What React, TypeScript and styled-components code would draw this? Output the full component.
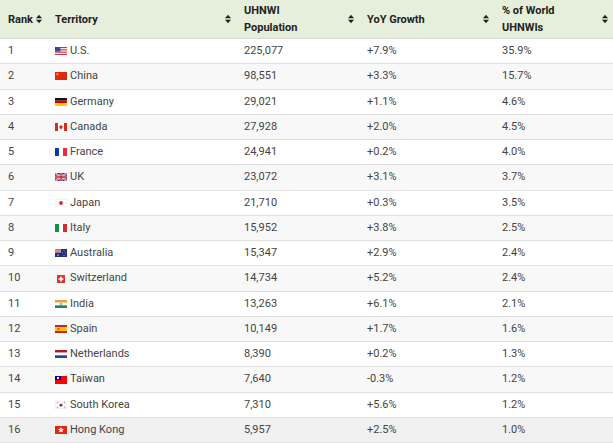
import React from 'react';
import styled, { createGlobalStyle } from 'styled-components';

const GlobalStyle = createGlobalStyle`
  html, body {
    margin: 0;
    padding: 0;
    background: #fff;
  }
  body {
    font-family: Roboto, "Liberation Sans", Arial, sans-serif;
  }
`;

type Row = {
  rank: number;
  name: string;
  flag: string;
  population: string;
  growth: string;
  share: string;
};

const rows: Row[] = [
  { rank: 1, name: 'U.S.', flag: 'us', population: '225,077', growth: '+7.9%', share: '35.9%' },
  { rank: 2, name: 'China', flag: 'cn', population: '98,551', growth: '+3.3%', share: '15.7%' },
  { rank: 3, name: 'Germany', flag: 'de', population: '29,021', growth: '+1.1%', share: '4.6%' },
  { rank: 4, name: 'Canada', flag: 'ca', population: '27,928', growth: '+2.0%', share: '4.5%' },
  { rank: 5, name: 'France', flag: 'fr', population: '24,941', growth: '+0.2%', share: '4.0%' },
  { rank: 6, name: 'UK', flag: 'gb', population: '23,072', growth: '+3.1%', share: '3.7%' },
  { rank: 7, name: 'Japan', flag: 'jp', population: '21,710', growth: '+0.3%', share: '3.5%' },
  { rank: 8, name: 'Italy', flag: 'it', population: '15,952', growth: '+3.8%', share: '2.5%' },
  { rank: 9, name: 'Australia', flag: 'au', population: '15,347', growth: '+2.9%', share: '2.4%' },
  { rank: 10, name: 'Switzerland', flag: 'ch', population: '14,734', growth: '+5.2%', share: '2.4%' },
  { rank: 11, name: 'India', flag: 'in', population: '13,263', growth: '+6.1%', share: '2.1%' },
  { rank: 12, name: 'Spain', flag: 'es', population: '10,149', growth: '+1.7%', share: '1.6%' },
  { rank: 13, name: 'Netherlands', flag: 'nl', population: '8,390', growth: '+0.2%', share: '1.3%' },
  { rank: 14, name: 'Taiwan', flag: 'tw', population: '7,640', growth: '-0.3%', share: '1.2%' },
  { rank: 15, name: 'South Korea', flag: 'kr', population: '7,310', growth: '+5.6%', share: '1.2%' },
  { rank: 16, name: 'Hong Kong', flag: 'hk', population: '5,957', growth: '+2.5%', share: '1.0%' },
];

const columns = [
  { label: ['Rank'], width: 47, tight: true },
  { label: ['Territory'], width: 189 },
  { label: ['UHNWI', 'Population'], width: 123 },
  { label: ['YoY Growth'], width: 135 },
  { label: ['% of World', 'UHNWIs'], width: 119 },
];

const Table = styled.table`
  width: 613px;
  table-layout: fixed;
  border-collapse: collapse;
  font-size: 11px;
`;

const HeadCell = styled.th`
  background: #e6eedc;
  color: #222;
  font-weight: 700;
  text-align: left;
  line-height: 17px;
  padding: 2px 5px 2px 8px;
  border-bottom: 1px solid #d6dccf;
  vertical-align: middle;
`;

const HeadInner = styled.div<{ $tight?: boolean }>`
  display: flex;
  align-items: center;
  justify-content: ${p => (p.$tight ? 'flex-start' : 'space-between')};
  gap: 3px;
`;

const BodyRow = styled.tr<{ $shade: string }>`
  background: ${p => p.$shade};
`;

const Cell = styled.td`
  color: #444;
  line-height: 16.27px;
  padding: 4px 5px 4px 8px;
  border-bottom: 1px solid #e0e0e0;
  white-space: nowrap;
  vertical-align: middle;
`;

const Territory = styled.div`
  display: flex;
  align-items: center;
  gap: 3px;
  height: 16.27px;
`;

const FlagBox = styled.svg`
  display: block;
  width: 12px;
  height: 8px;
  flex: none;
`;

const SortIcon = () => (
  <svg width="6" height="10" viewBox="0 0 6 10" style={{ flex: 'none' }}>
    <path d="M0 4.2 L3 0.8 L6 4.2 Z" fill="#222" />
    <path d="M0 5.8 L3 9.2 L6 5.8 Z" fill="#222" />
  </svg>
);

const star = (cx: number, cy: number, r: number) => {
  const pts: string[] = [];
  for (let i = 0; i < 10; i++) {
    const a = (Math.PI / 5) * i - Math.PI / 2;
    const rr = i % 2 === 0 ? r : r * 0.4;
    pts.push(`${(cx + rr * Math.cos(a)).toFixed(2)},${(cy + rr * Math.sin(a)).toFixed(2)}`);
  }
  return pts.join(' ');
};

const UnionJack = ({ w, h }: { w: number; h: number }) => (
  <g>
    <rect width={w} height={h} fill="#23327d" />
    <path d={`M0 0 L${w} ${h} M${w} 0 L0 ${h}`} stroke="#fff" strokeWidth={h * 0.22} />
    <path d={`M0 0 L${w} ${h} M${w} 0 L0 ${h}`} stroke="#cf1b2b" strokeWidth={h * 0.09} />
    <path d={`M${w / 2} 0 V${h} M0 ${h / 2} H${w}`} stroke="#fff" strokeWidth={h * 0.32} />
    <path d={`M${w / 2} 0 V${h} M0 ${h / 2} H${w}`} stroke="#cf1b2b" strokeWidth={h * 0.18} />
  </g>
);

const flagArt: Record<string, React.ReactNode> = {
  us: (
    <g>
      <rect width="12" height="8" fill="#fff" />
      {[0, 2, 4, 6].map(i => (
        <rect key={i} y={i * 1.15} width="12" height="1.15" fill="#c7374a" />
      ))}
      <rect width="5.4" height="4.6" fill="#3c4a8e" />
    </g>
  ),
  cn: (
    <g>
      <rect width="12" height="8" fill="#de2910" />
      <polygon points={star(2.4, 2.2, 1.5)} fill="#ffde00" />
    </g>
  ),
  de: (
    <g>
      <rect width="12" height="2.67" fill="#111" />
      <rect y="2.67" width="12" height="2.67" fill="#dd0000" />
      <rect y="5.33" width="12" height="2.67" fill="#ffce00" />
    </g>
  ),
  ca: (
    <g>
      <rect width="12" height="8" fill="#fff" />
      <rect width="3" height="8" fill="#d52b1e" />
      <rect x="9" width="3" height="8" fill="#d52b1e" />
      <polygon points="6,1.6 6.8,3 7.8,2.6 7.3,4.6 8,4.4 6.3,6 6.3,6.6 5.7,6.6 5.7,6 4,4.4 4.7,4.6 4.2,2.6 5.2,3" fill="#d52b1e" />
    </g>
  ),
  fr: (
    <g>
      <rect width="4" height="8" fill="#0f3aa8" />
      <rect x="4" width="4" height="8" fill="#fff" />
      <rect x="8" width="4" height="8" fill="#ee2a3a" />
    </g>
  ),
  gb: <UnionJack w={12} h={8} />,
  jp: (
    <g>
      <rect x="0.25" y="0.25" width="11.5" height="7.5" fill="#fff" stroke="#e6e6e6" strokeWidth="0.5" />
      <circle cx="6" cy="4" r="1.9" fill="#d8263c" />
    </g>
  ),
  it: (
    <g>
      <rect width="4" height="8" fill="#119245" />
      <rect x="4" width="4" height="8" fill="#fff" />
      <rect x="8" width="4" height="8" fill="#d72b34" />
    </g>
  ),
  au: (
    <g>
      <rect width="12" height="8" fill="#1d2e83" />
      <svg width="6" height="4" viewBox="0 0 12 8">
        <UnionJack w={12} h={8} />
      </svg>
      <polygon points={star(3, 6.2, 1.1)} fill="#fff" />
      <polygon points={star(9, 1.8, 0.7)} fill="#fff" />
      <polygon points={star(10.4, 4, 0.7)} fill="#fff" />
      <polygon points={star(9, 6.6, 0.7)} fill="#fff" />
      <polygon points={star(7.6, 3.8, 0.6)} fill="#fff" />
    </g>
  ),
  ch: (
    <g>
      <rect x="2" width="8" height="8" fill="#e03131" rx="0.6" />
      <rect x="5.2" y="1.6" width="1.6" height="4.8" fill="#fff" />
      <rect x="3.6" y="3.2" width="4.8" height="1.6" fill="#fff" />
    </g>
  ),
  in: (
    <g>
      <rect width="12" height="2.67" fill="#f59a36" />
      <rect y="2.67" width="12" height="2.67" fill="#fff" />
      <rect y="5.33" width="12" height="2.67" fill="#149147" />
      <circle cx="6" cy="4" r="1" fill="none" stroke="#2b3a8f" strokeWidth="0.45" />
    </g>
  ),
  es: (
    <g>
      <rect width="12" height="8" fill="#c8232c" />
      <rect y="2" width="12" height="4" fill="#ffc400" />
      <rect x="2.6" y="2.8" width="1.8" height="2.4" fill="#c8232c" opacity="0.75" />
    </g>
  ),
  nl: (
    <g>
      <rect width="12" height="2.67" fill="#ae1c28" />
      <rect y="2.67" width="12" height="2.67" fill="#fff" />
      <rect y="5.33" width="12" height="2.67" fill="#21468b" />
    </g>
  ),
  tw: (
    <g>
      <rect width="12" height="8" fill="#fe0000" />
      <rect width="6" height="4" fill="#000095" />
      <circle cx="3" cy="2" r="1.2" fill="#fff" />
    </g>
  ),
  kr: (
    <g>
      <rect x="0.25" y="0.25" width="11.5" height="7.5" fill="#fff" stroke="#e6e6e6" strokeWidth="0.5" />
      <path d="M4.4 4 A1.6 1.6 0 0 1 7.6 4 Z" fill="#cd2e3a" />
      <path d="M4.4 4 A1.6 1.6 0 0 0 7.6 4 Z" fill="#0047a0" />
      <path d="M1.6 1.8 L2.8 0.9 M2 2.4 L3.2 1.5 M9.2 0.9 L10.4 1.8 M8.8 1.5 L10 2.4 M1.6 6.2 L2.8 7.1 M2 5.6 L3.2 6.5 M9.2 7.1 L10.4 6.2 M8.8 6.5 L10 5.6" stroke="#333" strokeWidth="0.4" />
    </g>
  ),
  hk: (
    <g>
      <rect width="12" height="8" fill="#de2910" />
      {[0, 1, 2, 3, 4].map(i => {
        const a = (Math.PI * 2 * i) / 5 - Math.PI / 2;
        return (
          <ellipse
            key={i}
            cx={6 + Math.cos(a) * 1.3}
            cy={4 + Math.sin(a) * 1.3}
            rx="0.75"
            ry="1.3"
            transform={`rotate(${(i * 72).toFixed(0)} ${6 + Math.cos(a) * 1.3} ${4 + Math.sin(a) * 1.3})`}
            fill="#fff"
          />
        );
      })}
    </g>
  ),
};

const Flag = ({ code }: { code: string }) => (
  <FlagBox viewBox="0 0 12 8">{flagArt[code]}</FlagBox>
);

const shadeFor = (rank: number) => {
  if (rank === 16) return '#f0f0f0';
  return rank % 2 === 0 ? '#f8f8f8' : '#ffffff';
};

const App = () => (
  <>
    <GlobalStyle />
    <Table>
      <colgroup>
        {columns.map((c, i) => (
          <col key={i} style={{ width: c.width }} />
        ))}
      </colgroup>
      <thead>
        <tr>
          {columns.map((c, i) => (
            <HeadCell key={i}>
              <HeadInner $tight={c.tight}>
                <span>
                  {c.label.map((l, j) => (
                    <React.Fragment key={j}>
                      {j > 0 && <br />}
                      {l}
                    </React.Fragment>
                  ))}
                </span>
                <SortIcon />
              </HeadInner>
            </HeadCell>
          ))}
        </tr>
      </thead>
      <tbody>
        {rows.map(r => (
          <BodyRow key={r.rank} $shade={shadeFor(r.rank)}>
            <Cell>{r.rank}</Cell>
            <Cell>
              <Territory>
                <Flag code={r.flag} />
                {r.name}
              </Territory>
            </Cell>
            <Cell>{r.population}</Cell>
            <Cell>{r.growth}</Cell>
            <Cell>{r.share}</Cell>
          </BodyRow>
        ))}
      </tbody>
    </Table>
  </>
);

export default App;
